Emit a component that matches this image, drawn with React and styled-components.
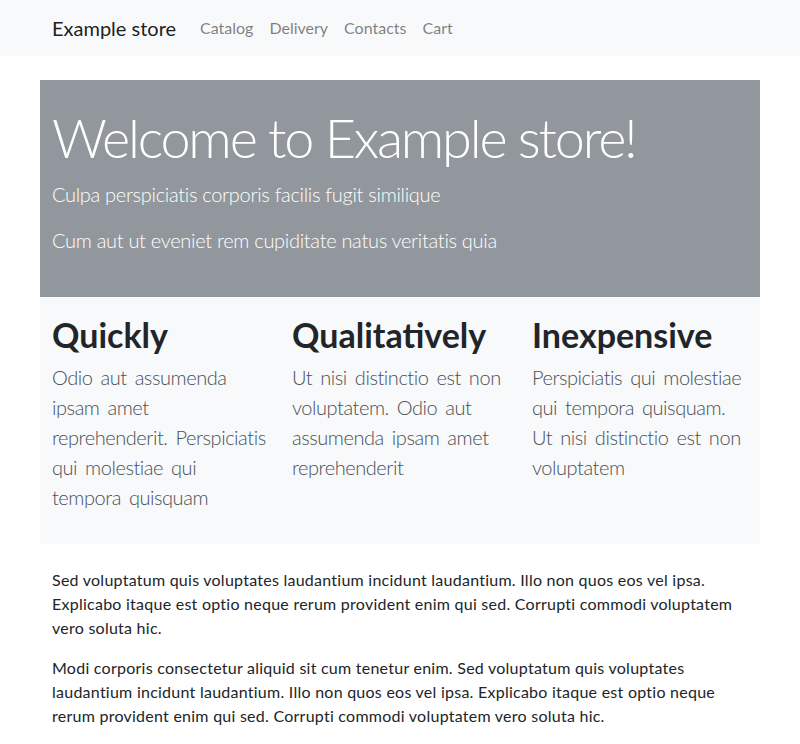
import styled, { createGlobalStyle } from "styled-components";

const GlobalStyle = createGlobalStyle`
  * {
    box-sizing: border-box;
  }
  body {
    margin: 0;
    font-family: Lato, "Open Sans", "Liberation Sans", sans-serif;
    font-size: 16px;
    line-height: 1.5;
    color: #212529;
    background: #fff;
  }
`;

const features = [
  {
    title: "Quickly",
    text: "Odio aut assumenda ipsam amet reprehenderit. Perspiciatis qui molestiae qui tempora quisquam",
  },
  {
    title: "Qualitatively",
    text: "Ut nisi distinctio est non voluptatem. Odio aut assumenda ipsam amet reprehenderit",
  },
  {
    title: "Inexpensive",
    text: "Perspiciatis qui molestiae qui tempora quisquam. Ut nisi distinctio est non voluptatem",
  },
];

function App() {
  return (
    <>
      <GlobalStyle />
      <Navbar>
        <NavInner>
          <Brand href="#">Example store</Brand>
          <NavLinks>
            <NavLink href="#">Catalog</NavLink>
            <NavLink href="#">Delivery</NavLink>
            <NavLink href="#">Contacts</NavLink>
            <NavLink href="#">Cart</NavLink>
          </NavLinks>
        </NavInner>
      </Navbar>
      <Container>
        <Jumbotron>
          <Title>Welcome to Example store!</Title>
          <Lead>Culpa perspiciatis corporis facilis fugit similique</Lead>
          <Lead>Cum aut ut eveniet rem cupiditate natus veritatis quia</Lead>
        </Jumbotron>
        <Features>
          {features.map((f) => (
            <Feature key={f.title}>
              <FeatureTitle>{f.title}</FeatureTitle>
              <FeatureText>{f.text}</FeatureText>
            </Feature>
          ))}
        </Features>
        <Body>
          <p>
            Sed voluptatum quis voluptates laudantium incidunt laudantium. Illo
            non quos eos vel ipsa. Explicabo itaque est optio neque rerum
            provident enim qui sed. Corrupti commodi voluptatem vero soluta hic.
          </p>
          <p>
            Modi corporis consectetur aliquid sit cum tenetur enim. Sed
            voluptatum quis voluptates laudantium incidunt laudantium. Illo non
            quos eos vel ipsa. Explicabo itaque est optio neque rerum provident
            enim qui sed. Corrupti commodi voluptatem vero soluta hic.
          </p>
        </Body>
      </Container>
    </>
  );
}

const Navbar = styled.nav`
  background: #f8f9fa;
  height: 56px;
`;

const NavInner = styled.div`
  max-width: 720px;
  height: 100%;
  margin: 0 auto;
  padding: 0 12px;
  display: flex;
  align-items: center;
`;

const Brand = styled.a`
  font-size: 20px;
  line-height: 30px;
  color: rgba(0, 0, 0, 0.9);
  text-decoration: none;
  margin-right: 16px;
`;

const NavLinks = styled.div`
  display: flex;
`;

const NavLink = styled.a`
  padding: 8px;
  color: rgba(0, 0, 0, 0.5);
  text-decoration: none;
`;

const Container = styled.main`
  max-width: 720px;
  margin: 24px auto 0;
`;

const Jumbotron = styled.section`
  background: #91979c;
  color: #fff;
  padding: 24px 12px 26px;
`;

const Title = styled.h1`
  margin: 0 0 8px;
  font-size: 54px;
  font-weight: 300;
  line-height: 67px;
  letter-spacing: -2.2px;
`;

const Lead = styled.p`
  margin: 0 0 16px;
  font-size: 20px;
  font-weight: 300;
  line-height: 30px;
  letter-spacing: -0.3px;
`;

const Features = styled.section`
  background: #f8f9fa;
  display: grid;
  grid-template-columns: repeat(3, 1fr);
  padding: 19px 0 16px;
`;

const Feature = styled.div`
  padding: 0 12px;
`;

const FeatureTitle = styled.h2`
  margin: 0 0 8px;
  font-size: 34px;
  font-weight: 700;
  line-height: 38px;
  color: #212529;
`;

const FeatureText = styled.p`
  margin: 0 0 16px;
  font-size: 20px;
  font-weight: 300;
  line-height: 30px;
  letter-spacing: -0.45px;
  word-spacing: 3px;
  color: #495057;
`;

const Body = styled.div`
  padding: 24px 12px 0;
  letter-spacing: 0.25px;
  p {
    margin: 0 0 16px;
  }
`;

export default App;
